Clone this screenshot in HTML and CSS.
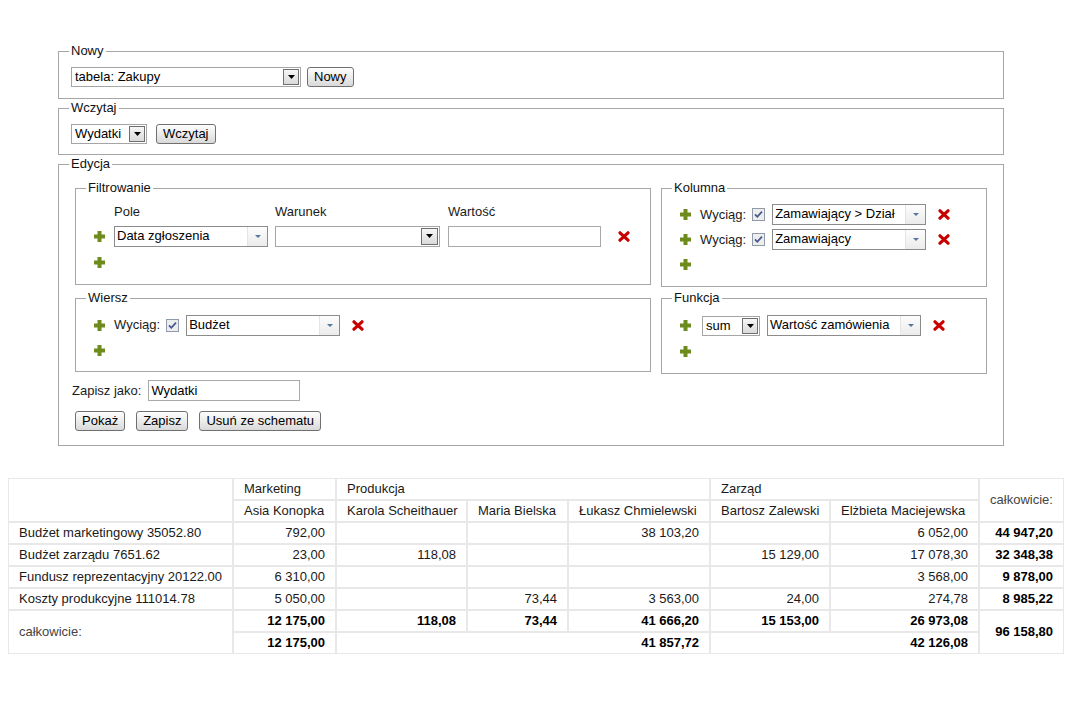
FILE: index.html
```html
<!DOCTYPE html>
<html lang="pl">
<head>
<meta charset="utf-8">
<title>Raport</title>
<link rel="stylesheet" href="styles.css">
</head>
<body>
<form class="builder">
  <fieldset class="fs fs-nowy">
    <legend>Nowy</legend>
    <div class="line">
      <div class="sel sel-nowy"><span class="sel-text">tabela: Zakupy</span><span class="sel-btn"><svg width="7" height="4" viewBox="0 0 7 4"><path d="M0 0h7L3.5 4z" fill="#000"/></svg></span></div>
      <button type="button" class="btn btn-nowy">Nowy</button>
    </div>
  </fieldset>

  <fieldset class="fs fs-wczytaj">
    <legend>Wczytaj</legend>
    <div class="line">
      <div class="sel sel-wczytaj"><span class="sel-text">Wydatki</span><span class="sel-btn"><svg width="7" height="4" viewBox="0 0 7 4"><path d="M0 0h7L3.5 4z" fill="#000"/></svg></span></div>
      <button type="button" class="btn btn-wczytaj">Wczytaj</button>
    </div>
  </fieldset>

  <fieldset class="fs fs-edycja">
    <legend>Edycja</legend>
    <div class="edit-grid">
      <fieldset class="fs fs-inner fs-filtr">
        <legend>Filtrowanie</legend>
        <div class="filter-grid">
          <span></span><span class="fh">Pole</span><span class="fh">Warunek</span><span class="fh">Wartość</span><span></span>
          <span class="plus-cell"><svg class="ico" width="11" height="11" viewBox="0 0 11 11"><path d="M3.5 0h4v3.5H11v4H7.5V11h-4V7.5H0v-4h3.5z" fill="#6e8b1d"/></svg></span>
          <span class="cell"><span class="combo combo-pole"><span class="combo-text">Data zgłoszenia</span><span class="combo-btn"><svg width="6" height="3" viewBox="0 0 6 3"><path d="M0 0h6L3 3z" fill="#56769c"/></svg></span></span></span>
          <span class="cell"><span class="sel sel-warunek"><span class="sel-text"></span><span class="sel-btn"><svg width="7" height="4" viewBox="0 0 7 4"><path d="M0 0h7L3.5 4z" fill="#000"/></svg></span></span></span>
          <span class="cell"><span class="input input-wartosc"></span></span>
          <span class="cell x-cell"><svg class="ico" width="12" height="11" viewBox="0 0 12 11"><path d="M2 1.8L10 9.2M10 1.8L2 9.2" stroke="#c80000" stroke-width="3.2" stroke-linecap="round"/></svg></span>
          <span class="plus-cell plus-last"><svg class="ico" width="11" height="11" viewBox="0 0 11 11"><path d="M3.5 0h4v3.5H11v4H7.5V11h-4V7.5H0v-4h3.5z" fill="#6e8b1d"/></svg></span>
        </div>
      </fieldset>

      <fieldset class="fs fs-inner fs-kolumna">
        <legend>Kolumna</legend>
        <div class="row r25">
          <span class="plus-cell"><svg class="ico" width="11" height="11" viewBox="0 0 11 11"><path d="M3.5 0h4v3.5H11v4H7.5V11h-4V7.5H0v-4h3.5z" fill="#6e8b1d"/></svg></span>
          <span class="lbl">Wyciąg:</span>
          <span class="chk"><svg width="13" height="13" viewBox="0 0 13 13"><rect x="0.5" y="0.5" width="12" height="12" fill="#ededed" stroke="#8f9aaa"/><path d="M3 6.4l2.3 2.4L10 3.6" fill="none" stroke="#44558f" stroke-width="1.7"/></svg></span>
          <span class="combo"><span class="combo-text">Zamawiający &gt; Dział</span><span class="combo-btn"><svg width="6" height="3" viewBox="0 0 6 3"><path d="M0 0h6L3 3z" fill="#56769c"/></svg></span></span>
          <span class="x"><svg class="ico" width="12" height="11" viewBox="0 0 12 11"><path d="M2 1.8L10 9.2M10 1.8L2 9.2" stroke="#c80000" stroke-width="3.2" stroke-linecap="round"/></svg></span>
        </div>
        <div class="row r25">
          <span class="plus-cell"><svg class="ico" width="11" height="11" viewBox="0 0 11 11"><path d="M3.5 0h4v3.5H11v4H7.5V11h-4V7.5H0v-4h3.5z" fill="#6e8b1d"/></svg></span>
          <span class="lbl">Wyciąg:</span>
          <span class="chk"><svg width="13" height="13" viewBox="0 0 13 13"><rect x="0.5" y="0.5" width="12" height="12" fill="#ededed" stroke="#8f9aaa"/><path d="M3 6.4l2.3 2.4L10 3.6" fill="none" stroke="#44558f" stroke-width="1.7"/></svg></span>
          <span class="combo"><span class="combo-text">Zamawiający</span><span class="combo-btn"><svg width="6" height="3" viewBox="0 0 6 3"><path d="M0 0h6L3 3z" fill="#56769c"/></svg></span></span>
          <span class="x"><svg class="ico" width="12" height="11" viewBox="0 0 12 11"><path d="M2 1.8L10 9.2M10 1.8L2 9.2" stroke="#c80000" stroke-width="3.2" stroke-linecap="round"/></svg></span>
        </div>
        <div class="row r24">
          <span class="plus-cell"><svg class="ico" width="11" height="11" viewBox="0 0 11 11"><path d="M3.5 0h4v3.5H11v4H7.5V11h-4V7.5H0v-4h3.5z" fill="#6e8b1d"/></svg></span>
        </div>
      </fieldset>

      <fieldset class="fs fs-inner fs-wiersz">
        <legend>Wiersz</legend>
        <div class="row r26">
          <span class="plus-cell"><svg class="ico" width="11" height="11" viewBox="0 0 11 11"><path d="M3.5 0h4v3.5H11v4H7.5V11h-4V7.5H0v-4h3.5z" fill="#6e8b1d"/></svg></span>
          <span class="lbl">Wyciąg:</span>
          <span class="chk"><svg width="13" height="13" viewBox="0 0 13 13"><rect x="0.5" y="0.5" width="12" height="12" fill="#ededed" stroke="#8f9aaa"/><path d="M3 6.4l2.3 2.4L10 3.6" fill="none" stroke="#44558f" stroke-width="1.7"/></svg></span>
          <span class="combo"><span class="combo-text">Budżet</span><span class="combo-btn"><svg width="6" height="3" viewBox="0 0 6 3"><path d="M0 0h6L3 3z" fill="#56769c"/></svg></span></span>
          <span class="x"><svg class="ico" width="12" height="11" viewBox="0 0 12 11"><path d="M2 1.8L10 9.2M10 1.8L2 9.2" stroke="#c80000" stroke-width="3.2" stroke-linecap="round"/></svg></span>
        </div>
        <div class="row r24">
          <span class="plus-cell"><svg class="ico" width="11" height="11" viewBox="0 0 11 11"><path d="M3.5 0h4v3.5H11v4H7.5V11h-4V7.5H0v-4h3.5z" fill="#6e8b1d"/></svg></span>
        </div>
      </fieldset>

      <fieldset class="fs fs-inner fs-funkcja">
        <legend>Funkcja</legend>
        <div class="row r27">
          <span class="plus-cell"><svg class="ico" width="11" height="11" viewBox="0 0 11 11"><path d="M3.5 0h4v3.5H11v4H7.5V11h-4V7.5H0v-4h3.5z" fill="#6e8b1d"/></svg></span>
          <span class="sel sel-sum"><span class="sel-text">sum</span><span class="sel-btn"><svg width="7" height="4" viewBox="0 0 7 4"><path d="M0 0h7L3.5 4z" fill="#000"/></svg></span></span>
          <span class="combo combo-fn"><span class="combo-text">Wartość zamówienia</span><span class="combo-btn"><svg width="6" height="3" viewBox="0 0 6 3"><path d="M0 0h6L3 3z" fill="#56769c"/></svg></span></span>
          <span class="x"><svg class="ico" width="12" height="11" viewBox="0 0 12 11"><path d="M2 1.8L10 9.2M10 1.8L2 9.2" stroke="#c80000" stroke-width="3.2" stroke-linecap="round"/></svg></span>
        </div>
        <div class="row r24">
          <span class="plus-cell"><svg class="ico" width="11" height="11" viewBox="0 0 11 11"><path d="M3.5 0h4v3.5H11v4H7.5V11h-4V7.5H0v-4h3.5z" fill="#6e8b1d"/></svg></span>
        </div>
      </fieldset>
    </div>

    <div class="save-row">
      <span class="save-lbl">Zapisz jako:</span>
      <span class="input input-save">Wydatki</span>
    </div>
    <div class="btn-row">
      <button type="button" class="btn">Pokaż</button>
      <button type="button" class="btn">Zapisz</button>
      <button type="button" class="btn">Usuń ze schematu</button>
    </div>
  </fieldset>
</form>

<table class="pivot">
  <colgroup>
    <col class="c0"><col class="c1"><col class="c2"><col class="c3"><col class="c4"><col class="c5"><col class="c6"><col class="c7">
  </colgroup>
  <thead>
    <tr>
      <td rowspan="2"></td>
      <td>Marketing</td>
      <td colspan="3">Produkcja</td>
      <td colspan="2">Zarząd</td>
      <td rowspan="2" class="muted">całkowicie:</td>
    </tr>
    <tr>
      <td>Asia Konopka</td>
      <td>Karola Scheithauer</td>
      <td>Maria Bielska</td>
      <td>Łukasz Chmielewski</td>
      <td>Bartosz Zalewski</td>
      <td>Elżbieta Maciejewska</td>
    </tr>
  </thead>
  <tbody>
    <tr>
      <td>Budżet marketingowy 35052.80</td>
      <td class="num">792,00</td><td class="num"></td><td class="num"></td><td class="num">38 103,20</td><td class="num"></td><td class="num">6 052,00</td><td class="num b">44 947,20</td>
    </tr>
    <tr>
      <td>Budżet zarządu 7651.62</td>
      <td class="num">23,00</td><td class="num">118,08</td><td class="num"></td><td class="num"></td><td class="num">15 129,00</td><td class="num">17 078,30</td><td class="num b">32 348,38</td>
    </tr>
    <tr>
      <td>Fundusz reprezentacyjny 20122.00</td>
      <td class="num">6 310,00</td><td class="num"></td><td class="num"></td><td class="num"></td><td class="num"></td><td class="num">3 568,00</td><td class="num b">9 878,00</td>
    </tr>
    <tr>
      <td>Koszty produkcyjne 111014.78</td>
      <td class="num">5 050,00</td><td class="num"></td><td class="num">73,44</td><td class="num">3 563,00</td><td class="num">24,00</td><td class="num">274,78</td><td class="num b">8 985,22</td>
    </tr>
    <tr>
      <td rowspan="2" class="muted">całkowicie:</td>
      <td class="num b">12 175,00</td><td class="num b">118,08</td><td class="num b">73,44</td><td class="num b">41 666,20</td><td class="num b">15 153,00</td><td class="num b">26 973,08</td>
      <td rowspan="2" class="num b">96 158,80</td>
    </tr>
    <tr>
      <td class="num b">12 175,00</td>
      <td colspan="3" class="num b">41 857,72</td>
      <td colspan="2" class="num b">42 126,08</td>
    </tr>
  </tbody>
</table>
</body>
</html>
```

FILE: styles.css
```css
body {
  margin: 8px;
  background: #fff;
  color: #111;
  font-family: "Liberation Sans", Arial, sans-serif;
  font-size: 13px;
  line-height: 16px;
}

.builder {
  margin: 35px 0 0 50px;
  width: 946px;
}

.fs {
  margin: 0 0 2px;
  padding: 8px 12px 10px;
  border: 1px solid #a6a6a6;
  min-width: 0;
}

.fs > legend {
  padding: 0 2px;
  margin-left: -2px;
  font-size: 13px;
  line-height: 16px;
  color: #111;
}

.fs-nowy { padding-bottom: 11px; margin-bottom: 1px; }
.fs-wczytaj { margin-bottom: 1px; }

.fs-edycja {
  margin-bottom: 0;
  padding: 8px 16px 14px;
}
.fs-edycja > legend {
  margin-left: -6px;
}

.line {
  display: flex;
  align-items: center;
  height: 20px;
}

/* classic select */
.sel {
  display: inline-flex;
  box-sizing: border-box;
  height: 20px;
  border: 1px solid #a5a5a5;
  background: #fff;
  color: #000;
}
.sel-text {
  flex: 1;
  padding: 0 3px;
  line-height: 17px;
  white-space: nowrap;
  overflow: hidden;
}
.sel-btn {
  display: flex;
  align-items: center;
  justify-content: center;
  box-sizing: border-box;
  width: 16px;
  margin: 1px;
  border: 1px solid #6f6f6f;
  background: linear-gradient(#f6f6f6, #dadada);
}
.sel-nowy { width: 230px; }
.sel-wczytaj { width: 76px; }
.sel-warunek { width: 165px; height: 21px; }
.sel-warunek .sel-btn { width: 17px; }
.sel-sum { width: 58px; margin-left: 2px; }

.btn {
  box-sizing: border-box;
  height: 20px;
  padding: 0 6px;
  border: 1px solid #707070;
  border-radius: 3px;
  background: linear-gradient(#fdfdfd, #ececec 50%, #d9d9d9);
  font-family: "Liberation Sans", Arial, sans-serif;
  font-size: 13px;
  line-height: 16px;
  color: #000;
}
.btn-nowy { margin-left: 6px; }
.btn-wczytaj { margin-left: 9px; }

/* edit area */
.edit-grid {
  display: grid;
  grid-template-columns: 576px 326px;
  column-gap: 10px;
  row-gap: 3px;
  align-items: start;
}

.fs-inner {
  margin: 0;
  padding: 6px 12px 10px;
}
.fs-wiersz { padding-bottom: 9px; }

.filter-grid {
  display: grid;
  grid-template-columns: 26px 161px 173px 153px auto;
  grid-template-rows: 20px 28px 24px;
  align-items: center;
}
.fh {
  align-self: start;
  padding-top: 2px;
  color: #1a1a1a;
}
.cell {
  display: flex;
  align-items: center;
}
.x-cell {
  padding-left: 17px;
}

.plus-cell {
  display: flex;
  align-items: center;
  width: 26px;
  flex: none;
}
.plus-cell .ico {
  margin-left: 6px;
}
.plus-last {
  grid-column: 1;
}

.row {
  display: flex;
  align-items: center;
}
.r24 { height: 24px; }
.r25 { height: 25px; }
.r26 { height: 26px; }
.r27 { height: 27px; }

.lbl {
  color: #1a1a1a;
  white-space: nowrap;
}
.chk {
  display: flex;
  margin: 0 7px 0 6px;
}
.x {
  display: flex;
  margin-left: 12px;
}

/* combobox */
.combo {
  display: inline-flex;
  box-sizing: border-box;
  width: 154px;
  height: 21px;
  border: 1px solid #8c8c8c;
  background: #fff;
  color: #000;
}
.combo-text {
  flex: 1;
  padding: 0 2px;
  line-height: 17px;
  white-space: nowrap;
  overflow: hidden;
}
.combo-btn {
  display: flex;
  align-items: center;
  justify-content: center;
  width: 19px;
  border-left: 1px solid #e4e4e4;
  background: linear-gradient(#fdfdfd, #ebebeb);
}
.combo-fn { margin-left: 7px; }

.input {
  display: inline-block;
  box-sizing: border-box;
  height: 21px;
  border: 1px solid #a9a9a9;
  background: #fff;
  padding: 0 2px;
  line-height: 19px;
  color: #000;
}
.input-wartosc { width: 153px; }
.input-save { width: 152px; }

.save-row {
  display: flex;
  align-items: center;
  height: 21px;
  margin: 6px 0 0 -3px;
}
.save-lbl {
  margin-right: 7px;
  color: #1a1a1a;
}

.btn-row {
  display: flex;
  gap: 11px;
  margin-top: 10px;
}

/* pivot table */
.pivot {
  width: 100%;
  margin-top: 32px;
  table-layout: fixed;
  border-collapse: separate;
  border-spacing: 0;
  color: #1a1a1a;
}
.pivot td {
  padding: 2px 10px;
  border: 1px solid #e8e8e8;
  line-height: 16px;
  font-size: 13px;
  white-space: nowrap;
  text-align: left;
  vertical-align: middle;
}
.pivot td.num { text-align: right; }
.pivot td.b { font-weight: bold; color: #000; }
.pivot td.muted { color: #444; }

.c0 { width: 225px; }
.c1 { width: 103px; }
.c2 { width: 131px; }
.c3 { width: 101px; }
.c4 { width: 142px; }
.c5 { width: 120px; }
.c6 { width: 149px; }
.c7 { width: 85px; }
```
